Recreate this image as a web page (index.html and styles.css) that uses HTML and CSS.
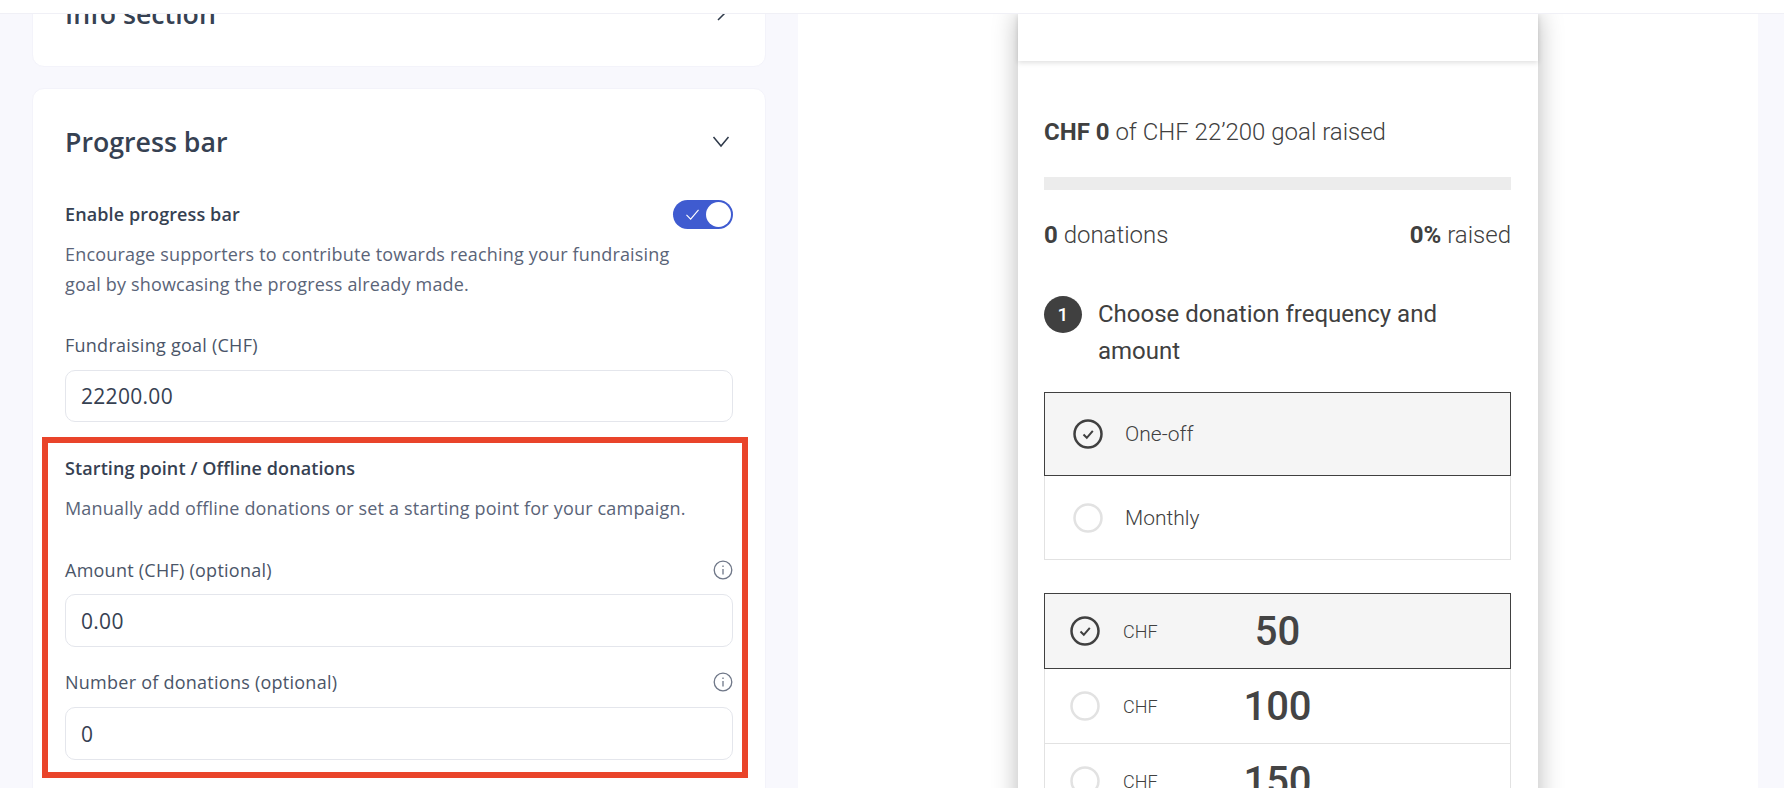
FILE: index.html
```html
<!DOCTYPE html>
<html lang="en">
<head>
<meta charset="utf-8">
<title>Progress bar settings</title>
<link rel="stylesheet" href="styles.css">
</head>
<body>
<div class="topbar"></div>
<main class="main">
  <section class="editor">
    <div class="card card-closed">
      <div class="card-head">
        <h2>Info section</h2>
        <svg class="chev" viewBox="0 0 20 20"><path d="M7 3l7 7-7 7"/></svg>
      </div>
    </div>
    <div class="card card-open">
      <div class="card-head">
        <h2>Progress bar</h2>
        <svg class="chev" viewBox="0 0 20 20"><path d="M2.500 6l7.500 9 7.500-9"/></svg>
      </div>
      <div class="toggle-row">
        <span class="strong">Enable progress bar</span>
        <span class="toggle">
          <svg class="toggle-check" viewBox="0 0 16 14"><path d="M1.500 7.500l4.500 4.500 8.500-10"/></svg>
          <span class="toggle-knob"></span>
        </span>
      </div>
      <p class="desc desc-wide">Encourage supporters to contribute towards reaching your fundraising goal by showcasing the progress already made.</p>
      <label class="field-label first">Fundraising goal (CHF)</label>
      <div class="input input-first">22200.00</div>

      <div class="highlight">
        <div class="strong">Starting point / Offline donations</div>
        <p class="desc desc-one">Manually add offline donations or set a starting point for your campaign.</p>
        <div class="label-row label-row-a">
          <label class="field-label">Amount (CHF) (optional)</label>
          <svg class="info" viewBox="0 0 20 20"><circle cx="10" cy="10" r="8.800"/><path d="M10 9v5.500"/><path d="M10 5.500v1.400"/></svg>
        </div>
        <div class="input">0.00</div>
        <div class="label-row label-row-b">
          <label class="field-label">Number of donations (optional)</label>
          <svg class="info" viewBox="0 0 20 20"><circle cx="10" cy="10" r="8.800"/><path d="M10 9v5.500"/><path d="M10 5.500v1.400"/></svg>
        </div>
        <div class="input">0</div>
      </div>
    </div>
  </section>

  <section class="preview">
    <div class="phone">
      <div class="phone-head"></div>
      <div class="phone-body">
        <p class="goal"><b>CHF 0</b> of CHF 22’200 goal raised</p>
        <div class="bar"></div>
        <div class="stats"><span><b>0</b> donations</span><span><b>0%</b> raised</span></div>
        <div class="step">
          <span class="badge">1</span>
          <span class="step-text">Choose donation frequency and amount</span>
        </div>
        <div class="options">
          <div class="opt freq selected">
            <svg class="radio" viewBox="0 0 30 30"><circle cx="15" cy="15" r="13.500"/><path d="M10.500 15.500l3.300 3.300 6-7"/></svg>
            <span>One-off</span>
          </div>
          <div class="opt freq">
            <svg class="radio off" viewBox="0 0 30 30"><circle cx="15" cy="15" r="13.500"/></svg>
            <span>Monthly</span>
          </div>
        </div>
        <div class="options amounts">
          <div class="opt amt selected">
            <svg class="radio" viewBox="0 0 30 30"><circle cx="15" cy="15" r="13.500"/><path d="M10.500 15.500l3.300 3.300 6-7"/></svg>
            <span class="cur">CHF</span><span class="val">50</span>
          </div>
          <div class="opt amt">
            <svg class="radio off" viewBox="0 0 30 30"><circle cx="15" cy="15" r="13.500"/></svg>
            <span class="cur">CHF</span><span class="val">100</span>
          </div>
          <div class="opt amt">
            <svg class="radio off" viewBox="0 0 30 30"><circle cx="15" cy="15" r="13.500"/></svg>
            <span class="cur">CHF</span><span class="val">150</span>
          </div>
        </div>
      </div>
    </div>
  </section>
</main>
</body>
</html>
```
FILE: styles.css
```css
* { box-sizing: border-box; }
html, body { margin: 0; height: 100%; overflow: hidden; }
body { background: #f8f8fd; font-family: "Open Sans", sans-serif; color: #364152; }
h2, p { margin: 0; }

.topbar { height: 14px; background: #fff; border-bottom: 1px solid #f0f0f6; }
.main { display: flex; height: 774px; overflow: hidden; }

.editor { width: 798px; flex: none; padding: 0 32px; }
.card { background: #fff; border: 1px solid #f3f3fa; border-radius: 12px; }
.card-closed { margin-top: -55px; margin-bottom: 21px; height: 108px; }
.card-open { height: 900px; }
.card-head { height: 106px; padding: 0 32px 2px; display: flex; align-items: center; justify-content: space-between; }
.card-closed .card-head { padding-bottom: 0; }
.card-head h2 { font-size: 26.700px; font-weight: 600; color: #364152; }
.chev { width: 20px; height: 20px; margin-right: 2px; }
.chev path { fill: none; stroke: #2f3a4a; stroke-width: 1.500; }

.toggle-row { margin: 4px 32px 0; height: 30px; display: flex; align-items: center; justify-content: space-between; }
.strong { font-size: 18px; font-weight: 600; letter-spacing: .1px; line-height: 24px; color: #364152; }
.toggle { width: 60px; height: 29px; border-radius: 15px; background: #3f5bd0; display: flex; align-items: center; justify-content: space-between; padding: 0 2px 0 12px; }
.toggle-check { width: 15px; height: 13px; }
.toggle-check path { fill: none; stroke: #fff; stroke-width: 1.200; }
.toggle-knob { width: 25px; height: 25px; border-radius: 50%; background: #fff; }

.desc { font-size: 18px; letter-spacing: .18px; line-height: 30px; color: #5a6478; }
.desc-wide { margin: 10px 0 0 32px; width: 620px; }
.desc-one { margin-top: 13px; }

.field-label { display: block; font-size: 18px; letter-spacing: .25px; line-height: 24px; color: #4a5568; }
.field-label.first { margin: 34px 32px 13px; }
.input { height: 53px; border: 1px solid #e4e6ec; border-radius: 10px; padding: 0 15px; display: flex; align-items: center; font-size: 21px; letter-spacing: .3px; color: #364152; }
.input-first { height: 52px; margin: 0 32px; }

.highlight { margin: 15px 17px 0 9px; border: 6px solid #e9442a; padding: 13px 9px 12px 17px; }
.label-row { display: flex; justify-content: space-between; align-items: center; height: 24px; }
.label-row-a { margin: 35px 0 12px; }
.label-row-b { margin: 23px 0 13px; }
.info { width: 20px; height: 20px; }
.info circle, .info path { fill: none; stroke: #6f7788; stroke-width: 1.300; }

.preview { width: 960px; flex: none; background: #fff; }
.phone { width: 520px; margin: 0 auto; height: 900px; background: #fff; box-shadow: 0 0 24px rgba(0,0,0,.28); font-family: Roboto, sans-serif; color: #404040; }
.phone-head { height: 47px; box-shadow: 0 2px 5px rgba(0,0,0,.12); }
.phone-body { padding: 0 27px 0 26px; }
.phone-body b { font-weight: 700; }

.goal { margin-top: 55px; font-size: 24px; font-weight: 300; line-height: 32px; }
.bar { margin-top: 29px; height: 13px; background: #ececec; }
.stats { margin-top: 29px; display: flex; justify-content: space-between; font-size: 24px; font-weight: 300; line-height: 32px; }
.step { margin-top: 45px; display: flex; gap: 16px; align-items: flex-start; }
.badge { flex: none; width: 38px; height: 37px; border-radius: 50%; background: #404040; color: #fff; font-size: 19px; font-weight: 500; display: flex; align-items: center; justify-content: center; }
.step-text { width: 370px; font-size: 24px; font-weight: 400; line-height: 37px; }

.options { margin-top: 22px; }
.amounts { margin-top: 33px; }
.opt { display: flex; align-items: center; border: 1px solid #e2e2e2; border-top-width: 0; font-weight: 300; }
.opt.selected { background: #f5f5f5; border: 1px solid #404040; }
.freq { height: 84px; padding-left: 28px; font-size: 21px; gap: 22px; }
.amt { height: 75px; padding-left: 25px; }
.amt.selected { height: 76px; }
.radio { width: 30px; height: 30px; flex: none; }
.radio circle { fill: none; stroke: #404040; stroke-width: 2.500; }
.radio path { fill: none; stroke: #404040; stroke-width: 2; }
.radio.off circle { stroke: #e2e2e2; }
.cur { margin-left: 23px; font-size: 18px; width: 50px; }
.val { flex: 1; text-align: center; margin-right: 128px; font-size: 40px; font-weight: 500; color: #444; }
```
